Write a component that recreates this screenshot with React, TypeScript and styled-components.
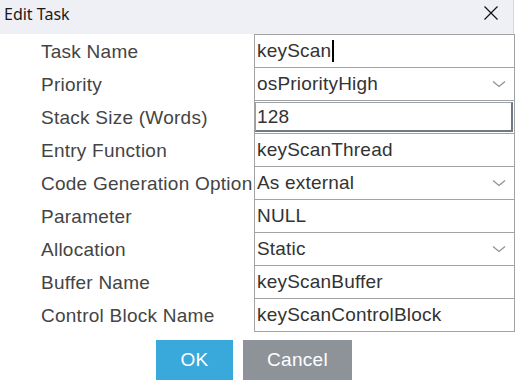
import React from "react";
import styled, { createGlobalStyle } from "styled-components";

const Global = createGlobalStyle`
  html, body { margin: 0; padding: 0; background: #ffffff; }
  body { width: 517px; height: 381px; overflow: hidden; }
`;

const Dialog = styled.div`
  width: 517px;
  height: 381px;
  display: flex;
  flex-direction: column;
  background: #ffffff;
  font-family: "Liberation Sans", Arial, sans-serif;
`;

const TitleBar = styled.div`
  height: 34px;
  box-sizing: border-box;
  width: 514px;
  border-right: 1px solid #d6d7dc;
  background: #eff0f6;
  display: flex;
  align-items: center;
  justify-content: space-between;
  padding: 0 0 0 4px;
`;

const Title = styled.span`
  font-family: "Noto Sans", "Open Sans", sans-serif;
  font-size: 16px;
  color: #1a1a1a;
  line-height: 1;
  margin-top: -7px;
`;

const CloseButton = styled.div`
  width: 14px;
  height: 14px;
  display: flex;
  align-items: center;
  justify-content: center;
  margin-right: 15px;
  margin-top: -8px;
`;

const Form = styled.div`
  display: grid;
  grid-template-columns: 213px 261px;
  grid-template-rows: repeat(9, 33px);
  padding-left: 41px;
`;

const Label = styled.div`
  font-size: 19px;
  letter-spacing: 0.25px;
  color: #444444;
  white-space: nowrap;
  display: flex;
  align-items: center;
  height: 34px;
  padding-top: 1px;
  box-sizing: border-box;
  overflow: visible;
`;

const Field = styled.div<{ $inset?: boolean }>`
  height: 34px;
  box-sizing: border-box;
  border: 1px solid #a2a2a2;
  background: #ffffff;
  display: flex;
  align-items: center;
  position: relative;
  padding: ${(p) => (p.$inset ? "0" : "0 0 0 2px")};
`;

const FieldText = styled.span`
  font-size: 19px;
  letter-spacing: 0.2px;
  color: #333333;
  white-space: nowrap;
  flex: 1;
`;

const Caret = styled.span`
  display: inline-block;
  width: 2px;
  height: 22px;
  background: #000;
  vertical-align: -5px;
  margin-left: 1px;
`;

const InsetBox = styled.div`
  margin: 0 1px 0 0;
  height: 30px;
  width: 100%;
  box-sizing: border-box;
  border-top: 1px solid #9aa0a8;
  border-left: 1px solid #9aa0a8;
  border-right: 2px solid #6f7985;
  border-bottom: 2px solid #6f7985;
  display: flex;
  align-items: center;
  padding-left: 1px;
`;

const Chevron = styled.svg`
  width: 14px;
  height: 8px;
  margin-right: 8px;
  flex: none;
`;

const Buttons = styled.div`
  display: flex;
  gap: 10px;
  padding: 9px 0 0 156px;
`;

const Button = styled.div<{ $primary?: boolean }>`
  height: 40px;
  width: ${(p) => (p.$primary ? "77px" : "109px")};
  background: ${(p) => (p.$primary ? "#39a8db" : "#8d9399")};
  color: #ffffff;
  font-size: 19px;
  letter-spacing: 0.3px;
  display: flex;
  align-items: center;
  justify-content: center;
`;

type Row = { label: string; value: string; kind?: "select" | "inset" | "caret" };

const rows: Row[] = [
  { label: "Task Name", value: "keyScan", kind: "caret" },
  { label: "Priority", value: "osPriorityHigh", kind: "select" },
  { label: "Stack Size (Words)", value: "128", kind: "inset" },
  { label: "Entry Function", value: "keyScanThread" },
  { label: "Code Generation Option", value: "As external", kind: "select" },
  { label: "Parameter", value: "NULL" },
  { label: "Allocation", value: "Static", kind: "select" },
  { label: "Buffer Name", value: "keyScanBuffer" },
  { label: "Control Block Name", value: "keyScanControlBlock" },
];

function ChevronIcon() {
  return (
    <Chevron viewBox="0 0 14 8">
      <path d="M1 1.5 L7 6.5 L13 1.5" fill="none" stroke="#8f8f8f" strokeWidth="1.2" />
    </Chevron>
  );
}

export default function App() {
  return (
    <Dialog>
      <Global />
      <TitleBar>
        <Title>Edit Task</Title>
        <CloseButton>
          <svg width="14" height="14" viewBox="0 0 14 14">
            <path d="M0.5 0.5 L13.5 13.5 M13.5 0.5 L0.5 13.5" stroke="#111" strokeWidth="1.2" />
          </svg>
        </CloseButton>
      </TitleBar>
      <Form>
        {rows.map((r) => (
          <React.Fragment key={r.label}>
            <Label>{r.label}</Label>
            {r.kind === "inset" ? (
              <Field $inset>
                <InsetBox>
                  <FieldText>{r.value}</FieldText>
                </InsetBox>
              </Field>
            ) : (
              <Field>
                <FieldText>
                  {r.value}
                  {r.kind === "caret" && <Caret />}
                </FieldText>
                {r.kind === "select" && <ChevronIcon />}
              </Field>
            )}
          </React.Fragment>
        ))}
      </Form>
      <Buttons>
        <Button $primary>OK</Button>
        <Button>Cancel</Button>
      </Buttons>
    </Dialog>
  );
}
